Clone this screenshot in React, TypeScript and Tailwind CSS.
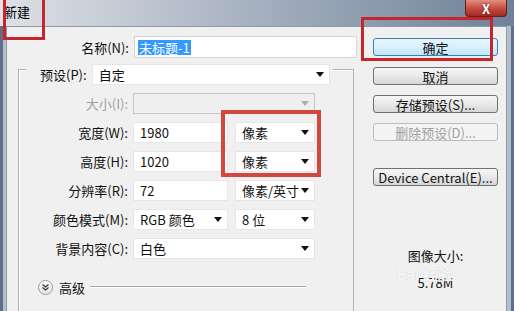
import React from "react"

const font = { fontFamily: '"Noto Sans CJK SC", "Noto Sans", sans-serif' }

function Arrow({ disabled = false }: { disabled?: boolean }) {
  return (
    <svg width="8" height="5" viewBox="0 0 8 5" className="shrink-0">
      <path d="M0 0 L8 0 L4 5 Z" fill={disabled ? "#b0b0b0" : "#111"} />
    </svg>
  )
}

function Select({
  value,
  width,
  disabled = false,
}: {
  value?: string
  width: string
  disabled?: boolean
}) {
  return (
    <div
      className={`flex h-[21px] items-center justify-between pl-[6px] pr-[5px] ${width} ${
        disabled
          ? "border border-[#c6c6c6] bg-[#efefef]"
          : "border border-[#e6e6e6] bg-white"
      }`}
    >
      <span className="whitespace-pre text-[13px] leading-none text-[#111]">{value}</span>
      <Arrow disabled={disabled} />
    </div>
  )
}

function Input({ value, width }: { value: string; width: string }) {
  return (
    <div className={`flex h-[21px] items-center border border-[#e6e6e6] bg-white pl-[6px] ${width}`}>
      <span className="text-[13px] leading-none text-[#111]">{value}</span>
    </div>
  )
}

function Row({ label, disabled = false, children }: { label: string; disabled?: boolean; children: React.ReactNode }) {
  return (
    <div className="flex h-[21px] items-center">
      <span
        className={`w-[114px] pr-[5px] text-right text-[13px] leading-none ${
          disabled ? "text-[#a0a0a0]" : "text-[#111]"
        }`}
      >
        {label}
      </span>
      <div className="flex items-center gap-[7px]">{children}</div>
    </div>
  )
}

function Button({
  label,
  primary = false,
  disabled = false,
  className = "",
}: {
  label: string
  primary?: boolean
  disabled?: boolean
  className?: string
}) {
  const tone = primary
    ? "border-[#3c7fb1] bg-gradient-to-b from-[#eaf6fd] via-[#d9f0fc] to-[#bee6fd] text-[#111]"
    : disabled
      ? "border-[#b9bdc1] bg-[#f4f4f4] text-[#a0a0a0]"
      : "border-[#707070] bg-gradient-to-b from-[#f6f6f6] via-[#e9e9e9] to-[#d6d6d6] text-[#111]"
  return (
    <div
      className={`flex h-[18px] w-[125px] items-center justify-center rounded-[3px] border text-[13px] leading-none ${tone} ${className}`}
    >
      {label}
    </div>
  )
}

export default function App() {
  return (
    <div className="relative h-[311px] w-[514px] overflow-hidden bg-[#7e8fa6]" style={font}>
      {/* title bar */}
      <div className="flex h-[26px] items-start bg-gradient-to-r from-[#dfe2e6] via-[#a5b0c0] to-[#6f8299]">
        <span className="ml-[4px] mt-[5px] text-[13px] leading-none text-black">新建</span>
        <div className="ml-auto mr-[7px] flex h-[17px] w-[42px] items-center justify-center rounded-b-[4px] border border-t-0 border-[#6b1d1d] bg-gradient-to-b from-[#e08e80] via-[#c74f41] to-[#a02a22]">
          <span className="text-[13px] font-bold leading-none text-white" style={{ textShadow: "0 0 2px #400" }}>
            X
          </span>
        </div>
      </div>

      <div className="flex h-[285px]">
        {/* left frame */}
        <div className="w-[6px] border-l-[3px] border-[#5d6e86] bg-[#b3bfce]" />

        {/* dialog body */}
        <div className="flex w-[501px] border-l border-t border-r border-[#8e9aa8] bg-[#f0f0f0] text-[#111]">
          {/* left column */}
          <div className="w-[366px]">
            <div className="mt-[9px] flex h-[22px] items-center">
              <span className="w-[127px] pr-[5px] text-right text-[13px] leading-none">名称(N):</span>
              <div className="flex h-[22px] w-[223px] items-center border border-[#d5d5d5] bg-white pl-[3px]">
                <span className="bg-[#3399ff] px-[1px] py-[1px] text-[13px] leading-none text-white">未标题-1</span>
              </div>
            </div>

            {/* group box */}
            <div className="ml-[11px] mt-[11px] h-[260px] w-[336px] border-l border-t border-r border-[#b2b2b2] shadow-[inset_1px_1px_0_#ffffff]">
              <div className="-mt-[6px] ml-[7px] flex h-[20px] w-[307px] items-center bg-[#f0f0f0] pl-[14px]">
                <span className="pr-[5px] text-[13px] leading-none">预设(P):</span>
                <Select value="自定" width="w-[238px]" />
              </div>

              <div className="mt-[9px] flex flex-col gap-[8px]">
                <Row label="大小(I):" disabled>
                  <Select width="w-[182px]" disabled />
                </Row>
                <Row label="宽度(W):">
                  <Input value="1980" width="w-[95px]" />
                  <Select value="像素" width="w-[80px]" />
                </Row>
                <Row label="高度(H):">
                  <Input value="1020" width="w-[95px]" />
                  <Select value="像素" width="w-[80px]" />
                </Row>
                <Row label="分辨率(R):">
                  <Input value="72" width="w-[95px]" />
                  <Select value="像素/英寸" width="w-[80px]" />
                </Row>
                <Row label="颜色模式(M):">
                  <Select value="RGB 颜色" width="w-[95px]" />
                  <Select value="8 位" width="w-[80px]" />
                </Row>
                <Row label="背景内容(C):">
                  <Select value="白色" width="w-[182px]" />
                </Row>
              </div>

              <div className="ml-[19px] mt-[20px] flex h-[16px] items-center">
                <div className="flex h-[15px] w-[15px] items-center justify-center rounded-full border border-[#9a9a9a] bg-gradient-to-b from-white to-[#e4e4e4]">
                  <svg width="7" height="7" viewBox="0 0 7 7">
                    <path d="M0.5 0.5 L3.5 3 L6.5 0.5 M0.5 3.5 L3.5 6 L6.5 3.5" fill="none" stroke="#333" strokeWidth="1.2" />
                  </svg>
                </div>
                <span className="ml-[6px] text-[13px] leading-none">高级</span>
                <div className="ml-[5px] h-[2px] w-[216px] border-t border-b border-t-[#a8a8a8] border-b-white" />
              </div>
            </div>
          </div>

          {/* right column */}
          <div className="mt-[11px] flex w-[125px] flex-col">
            <Button label="确定" primary />
            <Button label="取消" className="mt-[11px]" />
            <Button label="存储预设(S)..." className="mt-[10px]" />
            <Button label="删除预设(D)..." disabled className="mt-[10px]" />
            <Button label="Device Central(E)..." className="mt-[27px] text-[12px]" />
            <div className="mt-[63px] flex flex-col items-center gap-[14px] text-[13px] leading-none">
              <span>图像大小:</span>
              <span>5.78M</span>
            </div>
          </div>
        </div>

        {/* right frame */}
        <div className="w-[7px] border-r-[3px] border-[#5d6e86] bg-[#b3bfce]" />
      </div>

      {/* watermark */}
      <div
        className="absolute left-[396px] top-[266px] text-[15px] font-bold leading-none text-[#f6f6f6]"
        style={{ textShadow: "0 0 1px #c4c4c4" }}
      >
        Bai 经验
      </div>

      {/* annotation boxes */}
      <div className="absolute left-[3px] top-[-3px] h-[43px] w-[42px] border-[3px] border-[#c4262b]" />
      <div className="absolute left-[361px] top-[17px] h-[44px] w-[132px] border-[3px] border-[#c4262b]" />
      <div className="absolute left-[221px] top-[110px] h-[67px] w-[100px] border-[4px] border-[#d3483e]" />
    </div>
  )
}
